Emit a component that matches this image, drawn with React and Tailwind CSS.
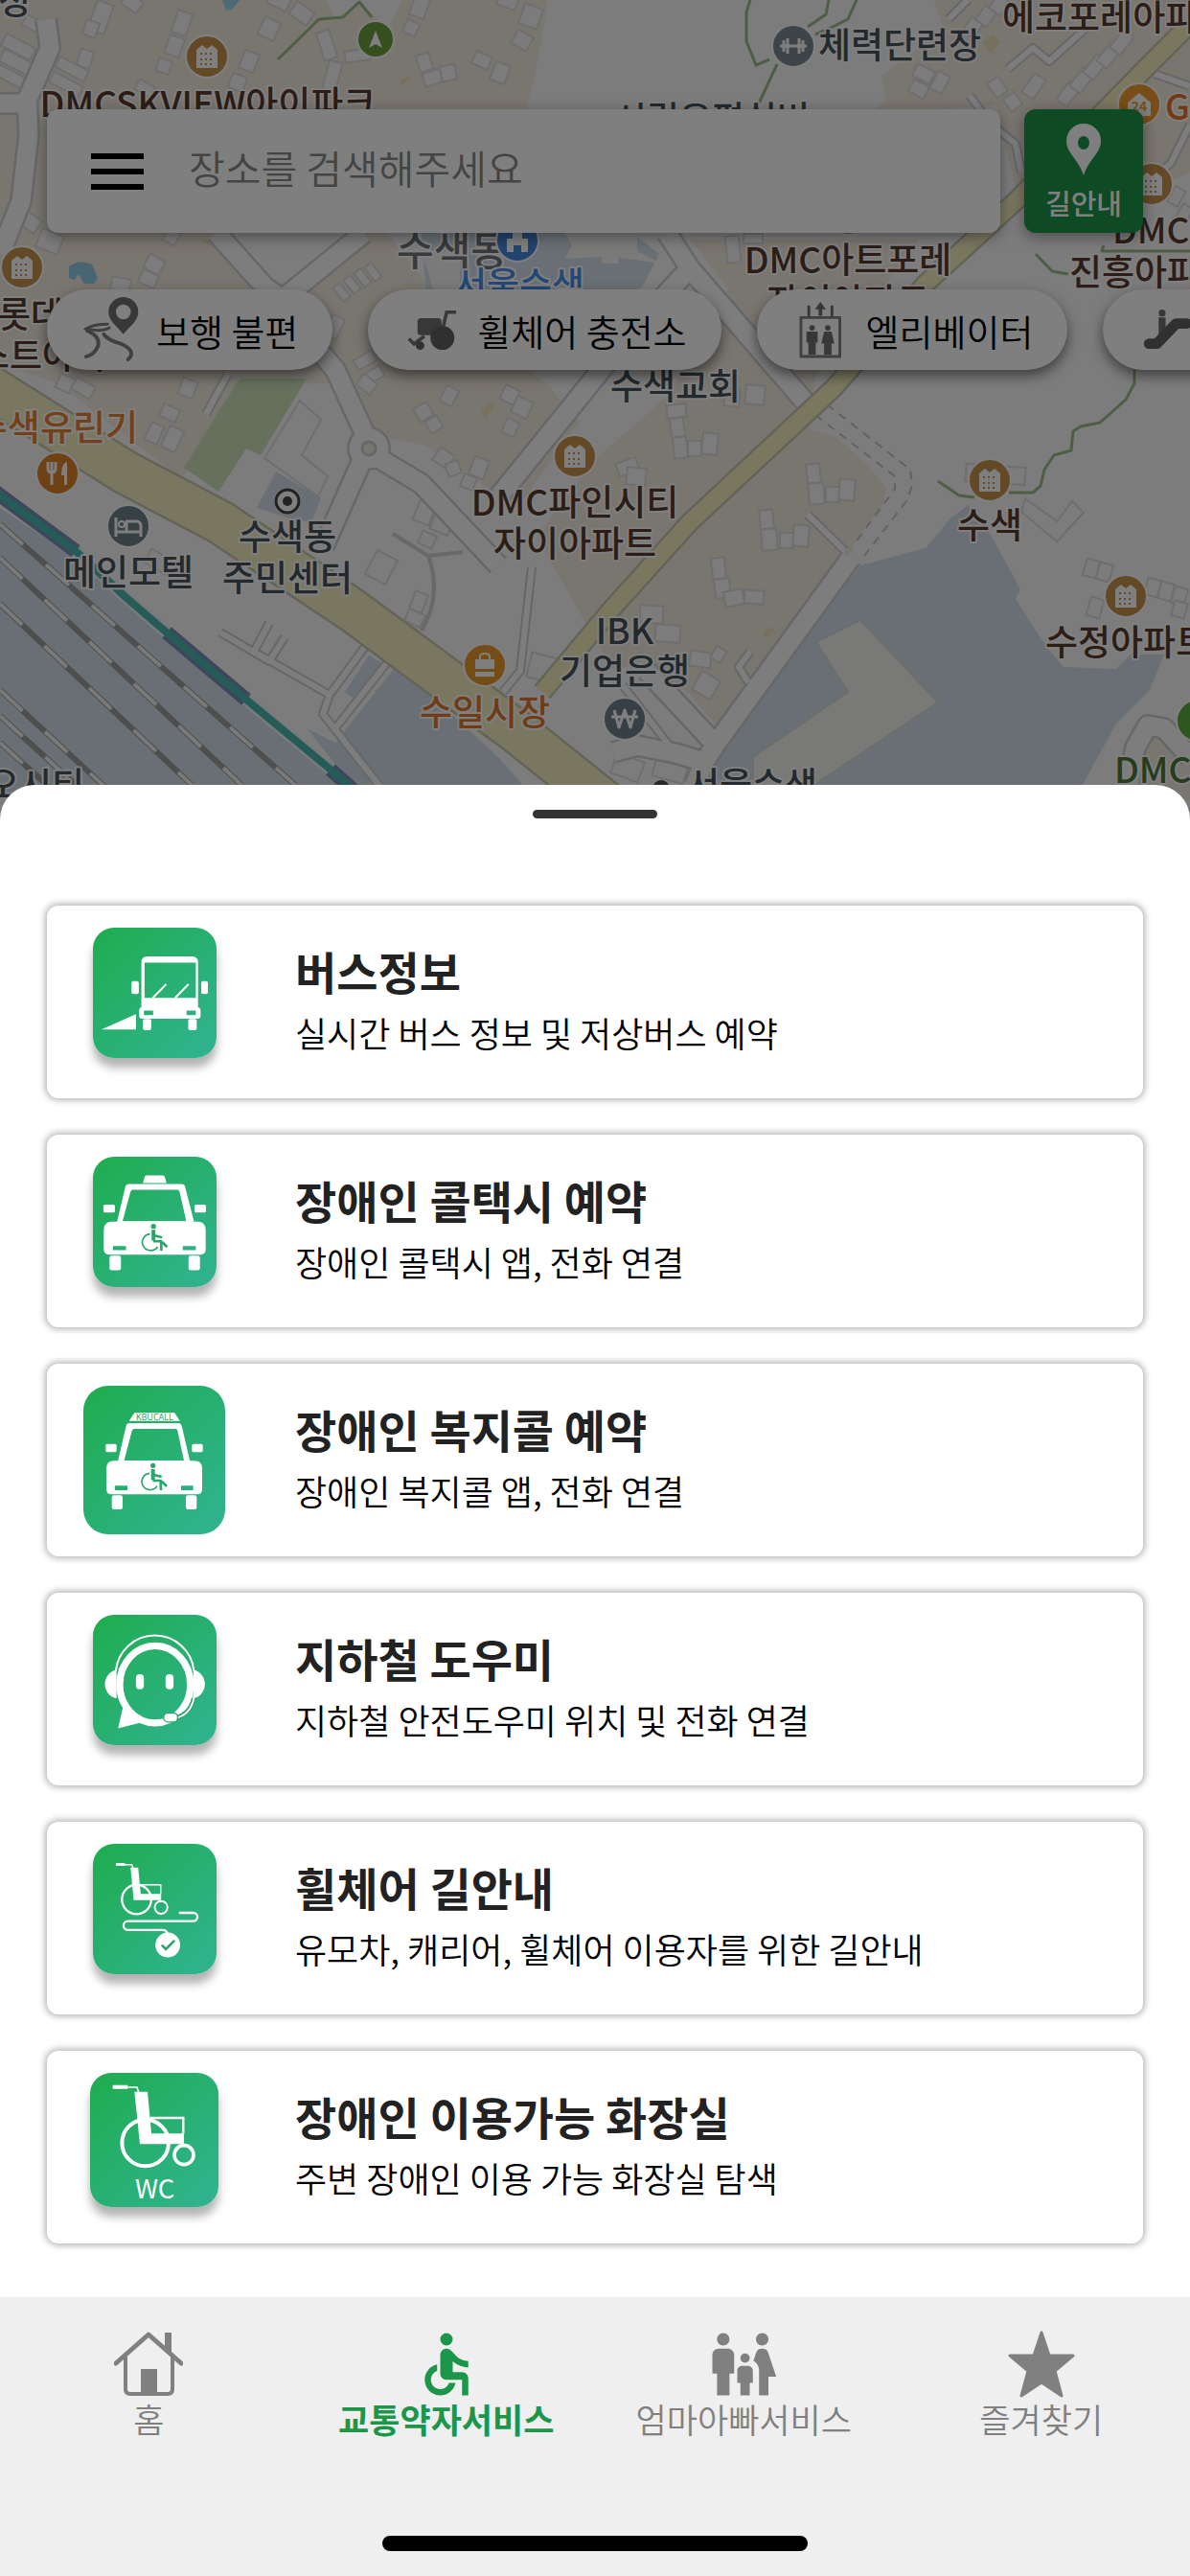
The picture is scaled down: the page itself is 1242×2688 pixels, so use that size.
import { MdAccessible, MdFamilyRestroom } from 'react-icons/md';

// [x, y, width, height, rotation]
const buildings = [
  [2, 42, 34, 14, 28], [0, 58, 34, 14, 28], [-6, 74, 34, 12, 28], [24, 20, 24, 12, 28],
  [58, 66, 34, 12, 28], [52, 82, 34, 12, 28], [82, 52, 14, 18, 18], [96, 2, 18, 32, 20],
  [88, 22, 14, 16, 20], [128, -4, 20, 14, 35], [182, 12, 16, 24, 18], [174, 38, 16, 20, 18],
  [164, 62, 14, 14, 18], [142, 86, 18, 12, 30], [280, -6, 22, 14, 25], [272, 20, 18, 20, 25],
  [304, 6, 22, 16, 35], [334, 32, 14, 30, -18], [340, 64, 14, 30, 15], [360, 52, 26, 12, -8],
  [252, 54, 16, 20, 22], [240, 78, 16, 16, 22], [430, -4, 16, 22, 20], [422, 22, 14, 14, 25],
  [436, 56, 14, 18, -18], [442, 74, 20, 14, -18], [460, 68, 16, 16, -12], [494, 56, 18, 14, 25],
  [514, 66, 16, 20, 20], [536, 34, 18, 16, 30], [544, 6, 20, 22, 20], [520, -6, 20, 14, 20],
  [16, 222, 26, 16, 35], [40, 242, 24, 20, 22], [172, 240, 14, 14, 28], [152, 268, 18, 16, 30],
  [146, 284, 18, 14, 24], [116, 290, 20, 14, 10], [352, 296, 9, 18, -38], [363, 288, 9, 18, -38],
  [374, 281, 9, 18, -38], [385, 275, 9, 18, -38], [342, 330, 14, 22, 25], [370, 370, 22, 12, -30],
  [378, 386, 22, 12, -30], [60, 392, 16, 16, 25], [76, 398, 22, 14, 30], [188, 396, 16, 18, 20],
  [168, 424, 18, 14, 25], [154, 442, 14, 20, 25], [172, 446, 16, 24, 25], [374, 394, 18, 14, 40],
  [434, 422, 16, 16, -30], [446, 436, 14, 14, -30], [462, 404, 14, 18, 28], [524, 404, 16, 16, 28],
  [536, 416, 18, 18, 25], [526, 438, 14, 16, 25], [454, 470, 18, 16, 35], [466, 482, 14, 14, -20],
  [492, 478, 16, 20, 20], [482, 496, 14, 14, 20], [434, 524, 18, 22, 22], [452, 532, 20, 24, 22],
  [438, 556, 16, 14, 25], [386, 578, 24, 28, 28], [430, 618, 14, 20, 20], [424, 638, 18, 14, 25],
  [552, 684, 30, 26, 14], [152, 580, 34, 16, 30], [954, 70, 20, 14, 28], [950, 86, 18, 14, 28],
  [974, 76, 14, 20, 28], [1034, 82, 14, 18, -35], [1050, 98, 14, 16, -35], [1072, 78, 14, 24, 35],
  [1008, 20, 14, 18, 35], [1022, 8, 14, 18, 35], [1036, -4, 14, 18, 35], [1108, 86, 14, 24, 38],
  [1122, 72, 14, 24, 38], [1136, 58, 14, 24, 38], [1150, 46, 14, 24, 38], [1164, 32, 14, 24, 38],
  [758, 246, 14, 28, -6], [776, 244, 20, 10, 0], [1222, 196, 12, 18, 30], [1230, 214, 12, 18, 30],
  [696, 422, 20, 14, -5], [700, 436, 14, 20, -8], [703, 456, 14, 22, -6], [718, 460, 14, 16, 0],
  [733, 452, 16, 22, 6], [756, 406, 16, 18, 4], [778, 402, 20, 20, 4], [644, 480, 22, 14, -20],
  [654, 488, 20, 18, 6], [842, 484, 14, 20, -6], [844, 504, 16, 22, -4], [862, 508, 14, 16, 0],
  [876, 500, 16, 22, 6], [793, 532, 14, 20, -6], [795, 552, 16, 22, -4], [814, 556, 14, 16, 0],
  [828, 548, 16, 22, 6], [743, 582, 14, 22, -6], [746, 604, 16, 20, -6], [756, 616, 20, 16, -12],
  [777, 616, 20, 14, 4], [668, 632, 24, 18, 2], [684, 652, 26, 18, 4], [720, 680, 22, 16, 8],
  [726, 704, 22, 22, 30], [744, 676, 12, 14, 30], [1132, 584, 14, 18, 16], [1146, 588, 14, 18, 16],
  [1196, 604, 14, 18, 16], [1210, 608, 14, 18, 16], [1224, 613, 14, 18, 16], [1136, 624, 14, 20, 16],
  [1224, 628, 14, 16, 16], [1008, 486, 62, 18, 4], [640, 790, 30, 22, 20], [682, 796, 34, 18, 16],
];

const roads = [
  'M226 243L277 300L350 386L385 462',
  'M380 243L295 312L277 300',
  'M378 480L358 525L338 570',
  'M390 475L440 505L520 590',
  'M48 20L52 50L28 105L30 140L22 210L0 265',
  'M0 108H28',
  'M696 243L720 280L845 425',
  'M720 280L660 345L600 420L515 525',
  'M888 582L748 775L735 795',
  'M675 700L746 776',
  'M640 785L665 778L705 786L735 795L725 819',
  'M1175 835L1185 780L1198 757L1215 760L1242 790',
];

const lanes = [
  'M230 660L281 690L297 665',
  'M281 650L265 680L344 725L383 672',
  'M344 725L337 745L400 825',
  'M405 690L350 760',
  'M555 592L543 700L525 722',
  'M843 537L882 575',
  'M783 680L771 696L781 712',
  'M990 20L1010 0',
  'M1052 72L1078 50L1095 64L1135 28',
  'M1012 100L1035 130L1060 150L1066 180',
  'M1205 77L1242 90',
  'M1242 130L1222 170L1200 190',
  'M215 432L238 390',
  'M650 715L700 780',
];

const labels = [
  { text: '정', x: -2, y: 15, color: '#465259', anchor: 'start' },
  { text: 'DMCSKVIEW아이파크', x: 217, y: 122, color: '#583c2e' },
  { text: '체력단련장', x: 939, y: 61, color: '#465259' },
  { text: '에코포레아파트', x: 1046, y: 32, color: '#583c2e', anchor: 'start' },
  { text: '시립은평실버', x: 743, y: 138, color: '#465259' },
  { text: 'GS25', x: 1216, y: 125, color: '#e8742a', anchor: 'start' },
  { text: 'DMC', x: 1161, y: 254, color: '#583c2e', anchor: 'start' },
  { text: '진흥아파트', x: 1116, y: 298, color: '#583c2e', anchor: 'start' },
  { text: '서울수색', x: 542, y: 311, color: '#4a8fe8' },
  { text: 'DMC아트포레', x: 885, y: 285, color: '#583c2e' },
  { text: '자이아파트', x: 885, y: 328, color: '#583c2e' },
  { text: '롯데캐슬', x: -2, y: 342, color: '#583c2e', anchor: 'start' },
  { text: '스트아파트', x: -24, y: 385, color: '#583c2e', anchor: 'start' },
  { text: '수색교회', x: 705, y: 417, color: '#465259' },
  { text: '수색유린기', x: 144, y: 460, color: '#e8802e', anchor: 'end' },
  { text: '메인모텔', x: 134, y: 611, color: '#465259' },
  { text: '수색동', x: 300, y: 574, color: '#465259' },
  { text: '주민센터', x: 300, y: 617, color: '#465259' },
  { text: 'DMC파인시티', x: 600, y: 538, color: '#583c2e' },
  { text: '자이아파트', x: 600, y: 581, color: '#583c2e' },
  { text: '수색', x: 1033, y: 562, color: '#583c2e' },
  { text: '수정아파트', x: 1091, y: 684, color: '#583c2e', anchor: 'start' },
  { text: 'IBK', x: 652, y: 672, color: '#465259' },
  { text: '기업은행', x: 652, y: 714, color: '#465259' },
  { text: '수일시장', x: 506, y: 757, color: '#e07830' },
  { text: '오시티', x: 88, y: 833, color: '#465259', anchor: 'end' },
  { text: '서울수색', x: 785, y: 833, color: '#465259' },
  { text: 'DMC', x: 1163, y: 817, color: '#4c7838', anchor: 'start' },
];

const apartments = [[216, 59], [1202, 192], [23, 279], [885, 223], [600, 476], [1033, 501], [1175, 622]];

const Pin = ({ x, y, r = 22, color, children }) => (
  <g transform={`translate(${x} ${y})`}>
    <circle r={r} fill={color} stroke="#fff" strokeWidth="2" />
    {children}
  </g>
);

const MapView = () => (
  <svg
    className="absolute inset-0 w-full h-full"
    viewBox="0 0 1242 855"
    preserveAspectRatio="xMidYMin slice"
    fill="none"
    aria-hidden="true"
  >
    <rect width="1242" height="855" fill="#f8f8f8" />
    {/* residential blocks */}
    <g fill="#f3eade">
      <path d="M0 0H572L560 70L520 243H405L470 330L570 400L605 440L540 530L445 465L395 455L370 400H250L190 500L60 400L0 380Z" />
      <path d="M560 560L621 480L700 410L760 300L720 250H960L850 395L845 448L872 456L905 485L925 510L920 532L885 580L748 758L721 725L670 690L640 700Z" />
      <path d="M975 0H1242V180L1100 240L1060 200L1040 110L910 118L925 104L920 80L985 30Z" />
      <path d="M1172 835L1182 790L1197 757L1242 795V835Z" />
    </g>
    <path d="M340 0H420L405 30L375 2L350 20Z" fill="#f8f8f8" />
    <path d="M226 243H380L295 310Z" fill="#f8f8f8" />
    {/* water and rail yard */}
    <g fill="#d2dfe8">
      <path d="M0 530L90 590L370 830H0Z" />
      <path d="M411 698L460 735L520 790L560 835H380L320 760L350 775Z" />
      <path d="M440 243H660L688 265L670 300L640 312H445Z" />
      <path d="M898 590L966 572L993 540L1010 527L1035 560L1065 615L1060 625L1092 675L1110 696L1165 698L1180 683L1215 683L1200 720L1165 755L1110 855H720L745 780Z" />
      <path d="M288 492L335 520L325 545L300 540L268 530Z" />
      <path d="M385 684L398 692L372 732L360 722Z" />
    </g>
    <path d="M440 262H480V312H455Z" fill="#f4f4f4" />
    <path d="M590 243H665V262L690 275L600 262Z" fill="#f4f4f4" />
    <path d="M596 257H647L645 275H628V268L590 270Z" fill="#f4f4f0" />
    <path d="M852 670L898 647L979 733L850 819L786 830L786 790L885 722Z" fill="#f2f4ee" stroke="#d8dcd8" strokeWidth="2" />
    <path d="M250 395H320L272 475L257 468L228 513L192 488Z" fill="#cce0bb" />
    <path d="M232 0H250L242 10L236 11Z" fill="#9cd4ec" />
    <path d="M72 278Q82 270 96 276L102 290L98 296H88L82 286L78 292L72 290Z" fill="#8fcbe6" />
    <g stroke="#dcdcdc" strokeWidth="2" fill="#f8f8f8">
      {buildings.map(([x, y, w, h, rot], i) => (
        <rect key={i} x={x} y={y} width={w} height={h} transform={`rotate(${rot} ${x + w / 2} ${y + h / 2})`} />
      ))}
      <path d="M313 418L335 438L315 475L342 497L332 518L276 478Z" />
      <path d="M1070 520L1103 544L1119 523L1131 535L1103 565L1066 534Z" />
    </g>
    <g fill="#ece0b8">
      <path d="M418 84L428 79L427 84L419 88Z" />
      <path d="M210 250L224 252L222 257L210 252Z" />
      <path d="M1026 44L1036 36L1044 44L1034 56Z" />
      <path d="M796 660L805 654L808 658L799 666Z" />
      <path d="M502 430L512 420L516 424L507 436Z" />
    </g>
    {/* roads: casing first, then fill */}
    <g strokeLinejoin="round">
      <g stroke="#cdced2">
        {lanes.map((d) => <path key={d} d={d} strokeWidth="10" />)}
        {roads.map((d) => <path key={d} d={d} strokeWidth="24" />)}
        <circle cx="385" cy="468" r="12" strokeWidth="22" />
      </g>
      <g stroke="#fbfbfb">
        {lanes.map((d) => <path key={d} d={d} strokeWidth="6" />)}
        {roads.map((d) => <path key={d} d={d} strokeWidth="19" />)}
        <circle cx="385" cy="468" r="12" strokeWidth="17" />
      </g>
      <circle cx="385" cy="468" r="7" fill="#f3eade" stroke="#cdced2" strokeWidth="3" />
      <path d="M857 428L942 500L943 512L896 575" stroke="#f8f8f8" strokeWidth="18" />
      <path d="M863 422L950 490L952 507L946 523L902 580M851 433L934 497V510L890 570" stroke="#c4c4c4" strokeWidth="2" strokeDasharray="9 7" />
      <path d="M410 557L447 580L483 576M447 580Q462 620 440 658" stroke="#d0d0d0" strokeWidth="4" />
      <path d="M1242 25L1190 77L1060 210L965 297L870 405L720 545L637 637L566 722" stroke="#c9c6b0" strokeWidth="22" />
      <path d="M1242 25L1190 77L1060 210L965 297L870 405L720 545L637 637L566 722" stroke="#f4efbe" strokeWidth="17" />
      <path d="M-20 398L131 493L230 545L368 637L540 764L660 860" stroke="#c9c6b0" strokeWidth="48" />
      <path d="M-20 398L131 493L230 545L368 637L540 764L660 860" stroke="#f4efc2" strokeWidth="43" />
    </g>
    {/* railway */}
    {['M0 547L308 819', 'M0 582L252 819', 'M0 630L200 819', 'M0 720L118 829', 'M0 747L90 829', 'M0 775L60 829'].map((d) => (
      <g key={d}>
        <path d={d} stroke="#9c9c9c" strokeWidth="6" />
        <path d={d} stroke="#f2f2f2" strokeWidth="4" strokeDasharray="32 32" />
      </g>
    ))}
    <path d="M-5 513L79 575L131 623L174 660L257 730L345 803L375 830" stroke="#f0f4f6" strokeWidth="13" />
    <path d="M-5 513L79 575M174 660L257 730M345 803L375 830" stroke="#7c8cb8" strokeWidth="15" />
    <path d="M-5 513L79 575L131 623L174 660L257 730L345 803L375 830" stroke="#4cb8b0" strokeWidth="8" />
    {/* walking trails */}
    <g stroke="#9cbc88" strokeWidth="3" strokeLinejoin="round">
      <path d="M290 62L333 20L358 18L375 2L388 18" />
      <path d="M783 0L779 13V43L789 68L803 62M865 0L862 15L843 28M894 0L885 20L865 30L851 36M811 67L791 110" />
      <path d="M979 502L1001 517L1017 519M1053 514H1078L1086 507L1090 490L1100 475L1118 470L1120 450L1128 445L1148 441L1175 417L1184 400V386" />
      <path d="M1081 265L1098 283L1115 286M1242 262L1150 262L1152 256" />
    </g>
    <circle cx="690" cy="823" r="9" fill="#465259" />
    <g className="font-['Noto_Sans_CJK_KR',sans-serif] font-medium text-[37px]" strokeLinejoin="round">
      <text x="472" y="277" textAnchor="middle" fill="#70757a" stroke="#fff" strokeWidth="4" paintOrder="stroke" className="text-[42px]">
        수색동
      </text>
      {apartments.map(([x, y]) => (
        <Pin key={`${x}-${y}`} x={x} y={y} color="#c8924e">
          <path d="M-11 12V-7L-5 -12L0 -8L5 -12L11 -7V12Z" fill="#fff" />
          <path d="M-7 -3H8M-7 3H8M-7 8H8" stroke="#c8924e" strokeWidth="2" strokeDasharray="2 3" />
        </Pin>
      ))}
      <Pin x={392} y={41} r={19} color="#6a9e3c">
        <path d="M0 -9L7 9L0 5L-7 9Z" fill="#fff" />
      </Pin>
      <Pin x={828} y={48} color="#7a8a94">
        <path d="M-10 -6V6M-6 -8V8M6 -8V8M10 -6V6M-14 0H14" stroke="#fff" strokeWidth="3" />
      </Pin>
      <Pin x={1189} y={109} color="#f09c2c">
        <path d="M-12 -2L0 -12L12 -2V12H-12Z" fill="#fff" />
        <text y="7" textAnchor="middle" fill="#f09c2c" className="text-[14px] font-bold">24</text>
      </Pin>
      <Pin x={540} y={251} color="#4488dc">
        <path d="M-11 12V-2H-5V-10H5V-2H11V12H4V5H-4V12Z" fill="#fff" />
      </Pin>
      <Pin x={60} y={494} color="#dc8428">
        <path d="M-10 -12V-5Q-10 -1 -6 -1Q-2 -1 -2 -5V-12M-6 -12V12" stroke="#fff" strokeWidth="3" />
        <path d="M4 2Q4 -11 10 -12V12H7V2Z" fill="#fff" />
      </Pin>
      <Pin x={134} y={549} color="#6f8089">
        <path d="M-13 -9V11M-13 6H13M13 11V0Q13 -5 8 -5H-2V5" stroke="#fff" strokeWidth="3" />
        <circle cx="-7" cy="-2" r="3" stroke="#fff" strokeWidth="2" />
      </Pin>
      <Pin x={300} y={523} r={13} color="#fff">
        <circle r="12" stroke="#444" strokeWidth="3" />
        <circle r="5" fill="#444" />
      </Pin>
      <Pin x={506} y={694} color="#e8982c">
        <path d="M-10 -6H10V4H-10ZM-10 7H10V12H-10Z" fill="#fff" />
        <path d="M-5 -6V-9Q-5 -12 0 -12Q5 -12 5 -9V-6" stroke="#fff" strokeWidth="2" />
      </Pin>
      <Pin x={652} y={750} color="#6f8089">
        <path d="M-11 -9L-6 9L0 -9L6 9L11 -9M-14 -2H14" stroke="#fff" strokeWidth="3" />
      </Pin>
      <Pin x={1250} y={752} color="#5cae40" />
      {labels.map(({ text, x, y, color, anchor = 'middle' }) => (
        <text key={`${text}-${y}`} x={x} y={y} textAnchor={anchor} fill={color} stroke="#fff" strokeWidth="4" paintOrder="stroke">
          {text}
        </text>
      ))}
    </g>
  </svg>
);

const WalkIcon = () => (
  <svg viewBox="0 0 60 70" className="h-[68px]" fill="none" stroke="#808080" strokeWidth="4" strokeLinecap="round">
    <path d="M43 0a16 16 0 0 0-16 16c0 10 10 16 16 24c6-8 16-14 16-24a16 16 0 0 0-16-16Zm0 8a8 8 0 1 1 0 16a8 8 0 0 1 0-16Z" fill="#707070" fillRule="evenodd" stroke="none" />
    <path d="M26 29Q10 29 3 34Q20 38 28 33" strokeWidth="3" />
    <path d="M4 36Q18 42 16 52Q12 62 3 64M22 40Q26 46 40 50Q58 58 48 67" />
  </svg>
);

const ChargeIcon = () => (
  <svg viewBox="0 0 58 48" className="h-[43px]" fill="#606060">
    <rect x="12" y="10" width="28" height="20" rx="4" fill="#707070" />
    <circle cx="41" cy="33" r="14" />
    <circle cx="15" cy="42" r="5" />
    <path d="M2 34L8 40L20 31M42 20L46 3H57" fill="none" stroke="#707070" strokeWidth="4" />
  </svg>
);

const ElevatorIcon = () => (
  <svg viewBox="0 0 46 62" className="h-[60px]" fill="#707070">
    <path d="M2 18H44V60H2Z" fill="none" stroke="#808080" strokeWidth="3" />
    <path d="M9 5H12V17H9ZM34 5H37V17H34ZM23 1L29 9H25V16H21V9H17Z" />
    <circle cx="14" cy="29" r="3" />
    <path d="M8 33H20V45H18V58H10V45H8Z" />
    <circle cx="31" cy="29" r="3" />
    <path d="M27 33H35L38 46H35V58H27V46H24Z" />
  </svg>
);

const EscalatorIcon = () => (
  <svg viewBox="0 0 60 46" className="h-[42px]" fill="#606060">
    <circle cx="24" cy="4" r="4" fill="#707070" />
    <path d="M20 9H28V22L20 29Z" fill="#707070" />
    <path d="M9 39H18L40 16H52" fill="none" stroke="#606060" strokeWidth="12" strokeLinecap="round" strokeLinejoin="round" />
  </svg>
);

const filters = [
  { label: '보행 불편', icon: WalkIcon },
  { label: '휠체어 충전소', icon: ChargeIcon },
  { label: '엘리베이터', icon: ElevatorIcon },
  { label: '에스컬레이터', icon: EscalatorIcon },
];

const Rider = ({ x, y }) => (
  <g transform={`translate(${x} ${y})`} fill="none" stroke="#2aa66c" strokeWidth="6">
    <circle cx="-3" cy="-37" r="8" fill="#2aa66c" stroke="none" />
    <path d="M-9 -26H3V8H-9Z" fill="#2aa66c" stroke="none" />
    <path d="M-14 -13A26 26 0 1 0 10 27" strokeWidth="5" />
    <path d="M0 -8L24 -2M-4 10H24M21 10L22 40M24 12L40 28" strokeWidth="8" />
  </g>
);

const BusArt = () => (
  <g fill="#fff">
    <path d="M135 271V319H27Z" />
    <path d="M170 90H312Q330 90 330 110V255H152V110Q152 90 170 90ZM162 109V220H323V109Z" fillRule="evenodd" />
    <path d="M188 220L230 177M258 220L300 177" stroke="#fff" strokeWidth="6" />
    <path d="M152 250H330Q338 250 338 262V276Q338 285 328 285H155Q145 285 145 276V262Q145 250 152 250ZM160 260V274H189V260ZM294 260V274H323V260Z" fillRule="evenodd" />
    <rect x="157" y="286" width="26" height="35" rx="6" />
    <rect x="299" y="286" width="27" height="35" rx="6" />
    <rect x="121" y="167" width="23" height="41" rx="6" />
    <rect x="340" y="167" width="21" height="41" rx="6" />
  </g>
);

const TaxiArt = () => (
  <g fill="#fff">
    <path d="M168 58H219Q224 58 226 64L231 82H157L162 64Q163 58 168 58Z" />
    <path d="M112 85H278Q287 85 289 93L318 206H75L102 93Q104 85 112 85ZM124 103Q120 103 118 109L93 202H293L272 109Q270 103 266 103Z" fillRule="evenodd" />
    <path d="M60 203H328Q354 203 354 230V290Q354 307 337 307H51Q34 307 34 290V230Q34 203 60 203ZM63 280V293H104V280ZM282 280V293H323V280Z" fillRule="evenodd" />
    <rect x="52" y="310" width="36" height="46" rx="7" />
    <rect x="300" y="310" width="36" height="46" rx="7" />
    <rect x="33" y="150" width="36" height="25" rx="5" />
    <rect x="319" y="150" width="36" height="25" rx="5" />
    <Rider x={193} y={255} />
  </g>
);

const CallTaxiArt = () => (
  <g fill="#fff">
    <path d="M160 85H286L302 110H143Z" />
    <text x="223" y="108" textAnchor="middle" fill="#2aa66c" className="font-['Noto_Sans',sans-serif] text-[27px]">KBUCALL</text>
    <path d="M145 117H298Q306 117 308 125L334 237H108L134 125Q136 117 145 117ZM160 135Q154 135 152 141L128 234H315L295 141Q294 135 288 135Z" fillRule="evenodd" />
    <path d="M96 235H348Q372 235 372 260V324Q372 340 356 340H88Q72 340 72 324V260Q72 235 96 235ZM99 313V327H138V313ZM306 313V327H344V313Z" fillRule="evenodd" />
    <rect x="89" y="343" width="34" height="44" rx="7" />
    <rect x="321" y="343" width="34" height="44" rx="7" />
    <rect x="70" y="182" width="34" height="26" rx="5" />
    <rect x="340" y="182" width="34" height="26" rx="5" />
    <Rider x={221} y={287} />
  </g>
);

const HelperArt = () => (
  <g fill="none" stroke="#fff">
    <path d="M74 172V262A46 46 0 0 1 74 172ZM315 172V262A46 46 0 0 0 315 172Z" fill="#fff" stroke="none" />
    <path d="M72 176A123 123 0 0 1 317 176" strokeWidth="6" />
    <ellipse cx="195" cy="218" rx="111" ry="121" strokeWidth="22" />
    <path d="M94 290L79 356L150 338Z" fill="#fff" stroke="none" />
    <path d="M316 262Q310 305 264 322" stroke="#2aa66c" strokeWidth="14" />
    <path d="M318 250Q314 308 262 324" strokeWidth="6" />
    <rect x="222" y="308" width="44" height="28" rx="13" fill="#fff" stroke="#2aa66c" strokeWidth="4" />
    <rect x="135" y="186" width="25" height="47" rx="12" fill="#fff" stroke="none" />
    <rect x="228" y="186" width="25" height="47" rx="12" fill="#fff" stroke="none" />
  </g>
);

const RouteArt = () => (
  <g fill="none" stroke="#fff">
    <path d="M72 64H100" strokeWidth="9" />
    <path d="M100 65H122L126 76" strokeWidth="4" />
    <path d="M118 74H142L150 157H214V176H128Z" fill="#fff" stroke="none" />
    <circle cx="137" cy="174" r="46" strokeWidth="7" />
    <path d="M150 128H213V157" strokeWidth="4" />
    <circle cx="214" cy="199" r="20" strokeWidth="6" />
    <path d="M270 216H315A13 13 0 0 1 315 242H110A14 14 0 0 0 110 270H218Q232 270 233 282" strokeWidth="7" />
    <circle cx="235" cy="317" r="39" fill="#fff" stroke="none" />
    <path d="M216 317L229 330L256 303" stroke="#2aa66c" strokeWidth="8" />
  </g>
);

const ToiletArt = () => (
  <g fill="none" stroke="#fff">
    <path d="M71 44H118" strokeWidth="12" />
    <path d="M118 45H147L152 60" strokeWidth="5" />
    <path d="M139 59H180L192 190H294V223H156Z" fill="#fff" stroke="none" />
    <circle cx="173" cy="219" r="73" strokeWidth="12" />
    <path d="M188 141H292V190" strokeWidth="7" />
    <circle cx="294" cy="257" r="30" strokeWidth="11" />
    <text x="203" y="393" textAnchor="middle" fill="#fff" stroke="none" className="font-['Noto_Sans_CJK_KR',sans-serif] font-normal text-[82px]">WC</text>
  </g>
);

const tileShadow = 'rounded-[22px] shadow-[0_10px_10px_rgba(0,0,0,0.3)]';

const services = [
  { title: '버스정보', desc: '실시간 버스 정보 및 저상버스 예약', art: BusArt, viewBox: '0 0 388 408', tile: `w-[129px] h-[136px] ${tileShadow}` },
  { title: '장애인 콜택시 예약', desc: '장애인 콜택시 앱, 전화 연결', art: TaxiArt, viewBox: '0 0 388 408', tile: `w-[129px] h-[136px] ${tileShadow}` },
  { title: '장애인 복지콜 예약', desc: '장애인 복지콜 앱, 전화 연결', art: CallTaxiArt, viewBox: '0 0 444 465', tile: 'w-[148px] h-[155px] rounded-[26px]' },
  { title: '지하철 도우미', desc: '지하철 안전도우미 위치 및 전화 연결', art: HelperArt, viewBox: '0 0 388 408', tile: `w-[129px] h-[136px] ${tileShadow}` },
  { title: '휠체어 길안내', desc: '유모차, 캐리어, 휠체어 이용자를 위한 길안내', art: RouteArt, viewBox: '0 0 388 408', tile: `w-[129px] h-[136px] ${tileShadow}` },
  { title: '장애인 이용가능 화장실', desc: '주변 장애인 이용 가능 화장실 탐색', art: ToiletArt, viewBox: '0 0 402 420', tile: `w-[134px] h-[140px] ${tileShadow}` },
];

const ServiceCard = ({ title, desc, art: Art, viewBox, tile }) => (
  <li>
    <a
      href="#"
      className="flex items-center gap-[73px] min-h-[201px] pl-[38px] pr-8 bg-white rounded-[12px] shadow-[0_0_7px_2px_rgba(0,0,0,0.3)]"
    >
      <span className="flex justify-center self-start w-[148px] pt-[23px] shrink-0">
        <svg viewBox={viewBox} className={`bg-linear-to-br from-[#1fac4c] to-[#31b391] ${tile}`} aria-hidden="true">
          <Art />
        </svg>
      </span>
      <span className="flex flex-col pb-[2px]">
        <span className="text-[47px] leading-[64px] font-bold text-[#222]">{title}</span>
        <span className="text-[36px] leading-[64px] font-[350] text-black">{desc}</span>
      </span>
    </a>
  </li>
);

const HomeIcon = () => (
  <svg viewBox="0 0 72 70" className="h-[70px]" fill="none" stroke="currentColor" strokeWidth="5" strokeLinejoin="round" strokeLinecap="round">
    <path d="M2 34L36 4L70 34" />
    <path d="M12 28V61Q12 66 17 66H56Q61 66 61 61V28" strokeWidth="4" />
    <path d="M53 2H60V26L53 20Z" fill="currentColor" stroke="none" />
    <path d="M28 40H45V65H28Z" fill="currentColor" stroke="none" />
  </svg>
);

const StarIcon = () => (
  <svg viewBox="0 0 70 70" className="h-[70px]" fill="currentColor" stroke="currentColor" strokeWidth="3" strokeLinejoin="round">
    <path d="M35 2L43 26H68L49 42L56 68L35 54L14 68L21 42L2 26H27Z" />
  </svg>
);

const tabs = [
  { label: '홈', icon: <HomeIcon /> },
  { label: '교통약자서비스', icon: <MdAccessible size={78} />, active: true },
  { label: '엄마아빠서비스', icon: <MdFamilyRestroom size={78} /> },
  { label: '즐겨찾기', icon: <StarIcon /> },
];

const App = () => (
  <div className="flex flex-col min-h-screen bg-white overflow-hidden font-['Noto_Sans_CJK_KR',sans-serif]">
    <section className="relative h-[855px] overflow-hidden">
      <MapView />
      <div className="relative flex gap-[25px] pt-[114px] px-[49px]">
        <form className="flex items-center flex-1 gap-[47px] h-[129px] pl-[46px] pr-8 bg-white rounded-[12px] shadow-[0_4px_16px_rgba(0,0,0,0.4)]">
          <button type="button" aria-label="메뉴" className="flex flex-col gap-[10px] w-[55px]">
            <span className="h-[6px] bg-black" />
            <span className="h-[6px] bg-black" />
            <span className="h-[6px] bg-black" />
          </button>
          <input
            type="text"
            aria-label="장소 검색"
            placeholder="장소를 검색해주세요"
            className="flex-1 min-w-0 pb-2 text-[41px] font-[350] outline-none placeholder:text-[#888]"
          />
        </form>
        <button
          type="button"
          className="flex flex-col items-center gap-[10px] w-[124px] pt-[15px] bg-[#1c964a] rounded-[12px] text-white text-[29px] leading-[36px] font-medium shadow-[0_4px_16px_rgba(0,0,0,0.4)]"
        >
          <svg viewBox="0 0 36 54" className="h-[54px]" fill="#fff">
            <path d="M18 0A18 18 0 0 0 0 18C0 31 12 36 18 54C24 36 36 31 36 18A18 18 0 0 0 18 0ZM18 13A6 7 0 1 1 18 27A6 7 0 1 1 18 13Z" fillRule="evenodd" />
          </svg>
          길안내
        </button>
      </div>
      <div className="relative flex gap-[37px] pl-[49px] pt-[59px]">
        {filters.map(({ label, icon: Icon }) => (
          <button
            key={label}
            type="button"
            className="flex items-center shrink-0 gap-[16px] h-[84px] px-9 bg-white rounded-full text-[38px] font-[350] text-black shadow-[0_6px_14px_rgba(0,0,0,0.5)]"
          >
            <span className="flex justify-center w-[62px]">
              <Icon />
            </span>
            {label}
          </button>
        ))}
      </div>
      <div className="absolute inset-0 bg-black/50" />
    </section>

    <main className="relative flex-1 -mt-9 px-[49px] pt-[26px] pb-[56px] bg-white rounded-t-[36px]">
      <div className="w-[130px] h-[9px] mx-auto bg-[#333] rounded-full" />
      <ul className="flex flex-col gap-[38px] mt-[91px]">
        {services.map((service) => (
          <ServiceCard key={service.title} {...service} />
        ))}
      </ul>
    </main>

    <nav className="bg-[#efefef] pb-[26px]">
      <div className="grid grid-cols-4 pt-[36px]">
        {tabs.map(({ label, icon, active }) => (
          <a
            key={label}
            href="#"
            aria-current={active ? 'page' : undefined}
            className={`flex flex-col items-center text-[35px] leading-[46px] ${active ? 'text-[#1c964a] font-bold' : 'text-[#808080] font-[350]'}`}
          >
            <span className="flex items-center justify-center h-[68px]">{icon}</span>
            {label}
          </a>
        ))}
      </div>
      <div className="w-[444px] h-[16px] mt-[99px] mx-auto bg-black rounded-full" />
    </nav>
  </div>
);

export default App;
